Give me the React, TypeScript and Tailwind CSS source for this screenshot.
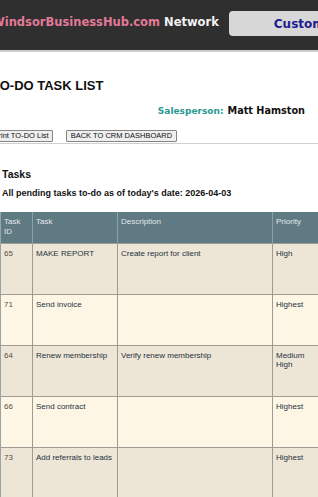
const tasks = [
  { id: "65", task: "MAKE REPORT", description: "Create report for client", priority: "High" },
  { id: "71", task: "Send invoice", description: "", priority: "Highest" },
  { id: "64", task: "Renew membership", description: "Verify renew membership", priority: "Medium High" },
  { id: "66", task: "Send contract", description: "", priority: "Highest" },
  { id: "73", task: "Add referrals to leads", description: "", priority: "Highest" },
];

const cols = "grid grid-cols-[32px_85px_155px_46px_70px_70px]";

export default function App() {
  return (
    <div className="w-[318px] h-[497px] overflow-hidden bg-white font-['Liberation_Sans',Arial,sans-serif] text-[#111]">
      {/* Network bar */}
      <div className="h-[52px] bg-[#2f2f2f] border-b-2 border-[#cdcdcd] flex items-start whitespace-nowrap font-['DejaVu_Sans',Verdana,sans-serif] font-bold">
        <span className="ml-[-8px] mt-[17px] text-[11.5px] leading-[11.5px] shrink-0">
          <span className="text-[#e27a98]">WindsorBusinessHub.com</span>{" "}
          <span className="text-[#f2f2f2]">Network</span>
        </span>
        <div className="ml-[10px] mt-[11px] h-[25px] w-[200px] shrink-0 rounded-[4px] bg-[#d7d7d7] flex items-center pl-[45px]">
          <span className="text-[12px] leading-[12px] text-[#1d1d8f]">Customer Portal</span>
        </div>
      </div>

      {/* Title */}
      <h1 className="mt-[27px] ml-[-8px] text-[13px] leading-[13px] font-bold whitespace-nowrap">TO-DO TASK LIST</h1>

      <div className="mt-[14px] h-[10px] flex items-baseline justify-end pr-[13px] font-['DejaVu_Sans',Verdana,sans-serif] font-bold leading-[10px] whitespace-nowrap">
        <span className="text-[9px] text-[#2a9a90]">Salesperson:</span>
        <span className="ml-[4px] text-[9.7px] text-[#111]">Matt Hamston</span>
      </div>

      {/* Actions */}
      <div className="mt-[14px] ml-[-11px] flex gap-[13px] whitespace-nowrap">
        <button className="h-[12px] px-[3.5px] border border-[#858585] rounded-[1px] bg-[#efefef] text-[7.5px] leading-[10px] text-[#111]">
          Print TO-DO List
        </button>
        <button className="h-[12px] px-[3.5px] border border-[#858585] rounded-[1px] bg-[#efefef] text-[7.5px] leading-[10px] text-[#111]">
          BACK TO CRM DASHBOARD
        </button>
      </div>
      <div className="mt-[1px] h-px bg-[#cfcfcf]" />

      <h2 className="mt-[25px] ml-[2px] text-[10.5px] leading-[11px] font-bold">Tasks</h2>
      <p className="mt-[9px] ml-[2px] text-[9px] leading-[9px] font-bold whitespace-nowrap">
        All pending tasks to-do as of today's date: 2026-04-03
      </p>

      {/* Task table */}
      <div className="mt-[14px] w-[500px] border-l border-[#9aa4a6]">
        <div className={`${cols} h-[31px] bg-[#5f7a82] text-[#e2e8ea] text-[8px] leading-[10px]`}>
          {["Task ID", "Task", "Description", "Priority", "Due Date", "Status"].map((h) => (
            <div key={h} className="px-[3px] pt-[5px] border-r border-[#8d9ea4]">
              {h === "Task ID" ? (
                <>
                  Task
                  <br />
                  ID
                </>
              ) : (
                h
              )}
            </div>
          ))}
        </div>
        {tasks.map((t, i) => (
          <div
            key={t.id}
            className={`${cols} h-[51px] border-t border-[#9c9b94] text-[8px] leading-[9px] ${
              i % 2 === 0 ? "bg-[#ede6d6]" : "bg-[#fdf6e5]"
            }`}
          >
            <div className="px-[3px] pt-[5px] border-r border-[#9c9b94] text-[#574f43]">{t.id}</div>
            <div className="px-[3px] pt-[5px] border-r border-[#9c9b94] text-[#1f3142]">{t.task}</div>
            <div className="px-[3px] pt-[5px] border-r border-[#9c9b94] text-[#1f3142]">{t.description}</div>
            <div className="px-[3px] pt-[5px] border-r border-[#9c9b94] text-[#1f3142]">{t.priority}</div>
            <div className="px-[3px] pt-[5px] border-r border-[#9c9b94]" />
            <div className="px-[3px] pt-[5px] border-r border-[#9c9b94]" />
          </div>
        ))}
      </div>
    </div>
  );
}
